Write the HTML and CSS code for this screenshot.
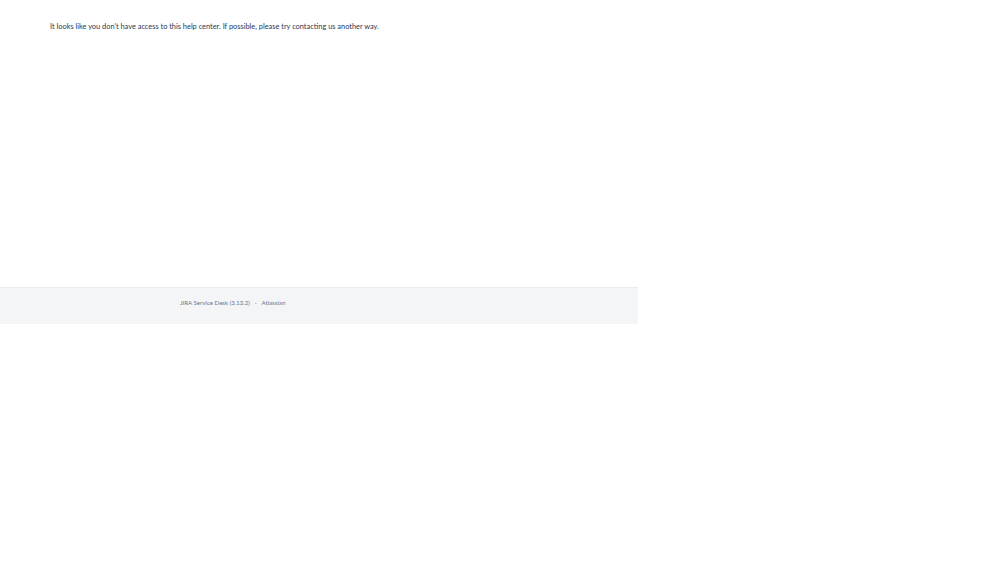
FILE: index.html
```html
<!DOCTYPE html>
<html>
<head>
<meta charset="utf-8">
<link rel="stylesheet" href="styles.css">
</head>
<body>
<div class="page">
  <main class="content">
    <p class="message">It looks like you don't have access to this help center. If possible, please try contacting us another way.</p>
  </main>
  <footer class="footer">
    <div class="footer-inner">
      <span class="footer-item">JIRA Service Desk (3.13.2)</span>
      <span class="footer-sep">·</span>
      <span class="footer-item">Atlassian</span>
    </div>
  </footer>
</div>
</body>
</html>
```
FILE: styles.css
```css
html, body {
  margin: 0;
  padding: 0;
  background: #fff;
}
body {
  font-family: Lato, "Open Sans", sans-serif;
  color: #172b4d;
}
.page {
  width: 638px;
}
.content {
  height: 287px;
  box-sizing: border-box;
  padding: 21px 0 0 50px;
}
.message {
  margin: 0;
  font-size: 7.4px;
  line-height: 12px;
  color: #253858;
}
.footer {
  height: 37px;
  box-sizing: border-box;
  background: #f4f5f7;
  border-top: 1px solid #ebecf0;
  padding-top: 10px;
}
.footer-inner {
  padding-left: 180px;
  display: flex;
  gap: 5px;
  font-size: 6.1px;
  line-height: 10px;
  color: #6b778c;
}
```
